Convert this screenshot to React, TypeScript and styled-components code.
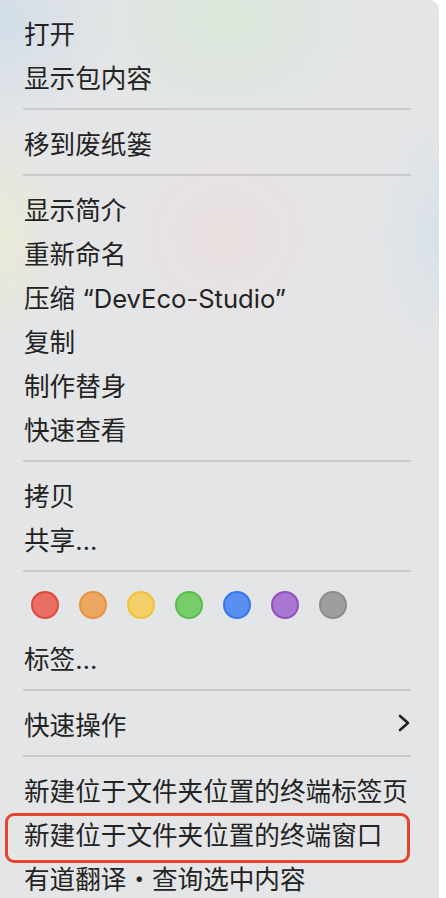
import styled, { createGlobalStyle } from "styled-components";

const GlobalStyle = createGlobalStyle`
  html, body {
    margin: 0;
    padding: 0;
    background: #ffffff;
  }
  body {
    font-family: Inter, "Noto Sans CJK SC", sans-serif;
    -webkit-font-smoothing: antialiased;
  }
`;

const Page = styled.div`
  width: 446px;
  height: 898px;
  overflow: hidden;
`;

const Menu = styled.div`
  width: 439px;
  min-height: 898px;
  box-sizing: border-box;
  padding: 10px 28px 0 23px;
  border-top-right-radius: 10px;
  background:
    radial-gradient(ellipse 140px 110px at 225px 20px, rgba(214, 232, 212, 0.7), transparent),
    radial-gradient(ellipse 120px 110px at 0px 20px, rgba(206, 220, 232, 0.8), transparent),
    radial-gradient(ellipse 120px 110px at 225px 235px, rgba(236, 222, 222, 0.8), transparent),
    radial-gradient(ellipse 70px 120px at 0px 235px, rgba(234, 234, 210, 0.8), transparent),
    radial-gradient(ellipse 70px 120px at 446px 235px, rgba(212, 224, 232, 0.8), transparent),
    #e4e5e7;
`;

const Item = styled.div<{ $outlined?: boolean }>`
  position: relative;
  height: 44px;
  display: flex;
  align-items: center;
  justify-content: space-between;
  padding-left: 1px;
  font-size: 25.6px;
  color: #232323;
  white-space: nowrap;

  ${({ $outlined }) =>
    $outlined &&
    `
    &::after {
      content: "";
      position: absolute;
      left: -18px;
      right: 1px;
      top: 2px;
      height: 44px;
      border: 3px solid #e8432d;
      border-radius: 9px;
    }
  `}
`;

const Separator = styled.div`
  height: 2px;
  margin: 10px 0;
  background: #cbcbcd;
`;

const TagRow = styled.div`
  display: flex;
  gap: 20px;
  padding: 9px 0 16px 8px;
`;

const Dot = styled.span<{ $fill: string; $ring: string }>`
  width: 28px;
  height: 28px;
  box-sizing: border-box;
  border-radius: 50%;
  background: ${({ $fill }) => $fill};
  border: 2px solid ${({ $ring }) => $ring};
`;

const Chevron = styled.svg`
  width: 14px;
  height: 20px;
  margin-right: 0;
`;

const tags = [
  { fill: "#e96d63", ring: "#e0493e" },
  { fill: "#eca762", ring: "#e8923b" },
  { fill: "#f2d066", ring: "#efc23b" },
  { fill: "#79cc6c", ring: "#58bd48" },
  { fill: "#5a8ef0", ring: "#3577ef" },
  { fill: "#a976d0", ring: "#9450c3" },
  { fill: "#9e9ea1", ring: "#8b8b8e" },
];

export default function App() {
  return (
    <Page>
      <GlobalStyle />
      <Menu>
        <Item>打开</Item>
        <Item>显示包内容</Item>
        <Separator />
        <Item>移到废纸篓</Item>
        <Separator />
        <Item>显示简介</Item>
        <Item>重新命名</Item>
        <Item>压缩 “DevEco-Studio”</Item>
        <Item>复制</Item>
        <Item>制作替身</Item>
        <Item>快速查看</Item>
        <Separator />
        <Item>拷贝</Item>
        <Item>共享…</Item>
        <Separator />
        <TagRow>
          {tags.map((t) => (
            <Dot key={t.fill} $fill={t.fill} $ring={t.ring} />
          ))}
        </TagRow>
        <Item>标签…</Item>
        <Separator />
        <Item>
          快速操作
          <Chevron viewBox="0 0 14 20">
            <path
              d="M3 3 L11 10 L3 17"
              fill="none"
              stroke="#222"
              strokeWidth="2.6"
              strokeLinecap="round"
              strokeLinejoin="round"
            />
          </Chevron>
        </Item>
        <Separator />
        <Item>新建位于文件夹位置的终端标签页</Item>
        <Item $outlined>新建位于文件夹位置的终端窗口</Item>
        <Item>有道翻译・查询选中内容</Item>
      </Menu>
    </Page>
  );
}
